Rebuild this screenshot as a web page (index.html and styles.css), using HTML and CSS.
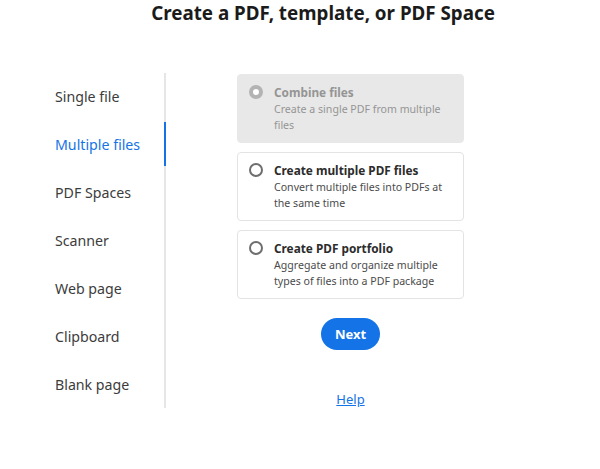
FILE: index.html
```html
<!DOCTYPE html>
<html lang="en">
<head>
    <meta charset="UTF-8">
    <meta name="viewport" content="width=device-width, initial-scale=1.0">
    <title>Create a PDF</title>
    <link rel="stylesheet" href="styles.css">
</head>
<body>
    <h1 class="page-title">Create a PDF, template, or PDF Space</h1>

    <div class="content">
        <nav class="side-nav">
            <a class="nav-item">Single file</a>
            <a class="nav-item active">Multiple files</a>
            <a class="nav-item">PDF Spaces</a>
            <a class="nav-item">Scanner</a>
            <a class="nav-item">Web page</a>
            <a class="nav-item">Clipboard</a>
            <a class="nav-item">Blank page</a>
        </nav>

        <div class="options">
            <label class="option-card disabled">
                <span class="radio"></span>
                <span class="option-text">
                    <span class="option-title">Combine files</span>
                    <span class="option-desc">Create a single PDF from multiple files</span>
                </span>
            </label>
            <label class="option-card">
                <span class="radio"></span>
                <span class="option-text">
                    <span class="option-title">Create multiple PDF files</span>
                    <span class="option-desc">Convert multiple files into PDFs at the same time</span>
                </span>
            </label>
            <label class="option-card">
                <span class="radio"></span>
                <span class="option-text">
                    <span class="option-title">Create PDF portfolio</span>
                    <span class="option-desc">Aggregate and organize multiple types of files into a PDF package</span>
                </span>
            </label>

            <button class="next-button">Next</button>
            <a class="help-link" href="#">Help</a>
        </div>
    </div>
</body>
</html>
```

FILE: styles.css
```css
* {
    box-sizing: border-box;
}

body {
    font-family: 'Noto Sans', sans-serif;
    background-color: #ffffff;
    color: #2c2c2c;
    margin: 0;
}

.page-title {
    margin: 0;
    padding: 1px 0 0 46px;
    font-size: 18.8px;
    font-weight: bold;
    text-align: center;
    color: #1b1b1b;
    line-height: 24px;
}

.content {
    display: flex;
    gap: 71px;
    padding-top: 48px;
}

.side-nav {
    display: flex;
    flex-direction: column;
    width: 166px;
    padding-left: 55px;
    border-right: 2px solid #e6e6e6;
}

.nav-item {
    position: relative;
    height: 48px;
    line-height: 48px;
    font-size: 14.2px;
    color: #3c3c3c;
    white-space: nowrap;
}

.nav-item:last-child {
    height: 44px;
}

.nav-item.active {
    color: #1473e6;
}

.nav-item.active::after {
    content: '';
    position: absolute;
    top: 1px;
    bottom: 3px;
    right: -2px;
    width: 2px;
    background-color: #1473e6;
}

.options {
    display: flex;
    flex-direction: column;
    align-items: center;
    width: 227px;
    gap: 9px;
    padding-top: 1px;
}

.option-card {
    display: flex;
    gap: 11px;
    width: 100%;
    height: 69px;
    padding: 7px 12px 0 11px;
    border: 1px solid #e3e3e3;
    border-radius: 4px;
}

.option-card.disabled {
    background-color: #e8e8e8;
    border-color: #e8e8e8;
}

.radio {
    flex: none;
    width: 14px;
    height: 14px;
    margin-top: 3px;
    border: 2px solid #6e6e6e;
    border-radius: 50%;
    background-color: #ffffff;
}

.disabled .radio {
    border: 4.5px solid #b3b3b3;
    background-color: #ffffff;
}

.option-text {
    display: flex;
    flex-direction: column;
}

.option-title {
    font-size: 11.8px;
    font-weight: bold;
    line-height: 20px;
    color: #2c2c2c;
}

.option-desc {
    font-size: 10.6px;
    line-height: 15.5px;
    color: #4b4b4b;
}

.disabled .option-title,
.disabled .option-desc {
    color: #959595;
}

.next-button {
    margin-top: 10px;
    width: 59px;
    height: 32px;
    border: none;
    border-radius: 16px;
    background-color: #1473e6;
    color: #ffffff;
    font-family: 'Noto Sans', sans-serif;
    font-size: 13px;
    font-weight: bold;
}

.help-link {
    margin-top: 31px;
    font-size: 13px;
    color: #1473e6;
}
```
